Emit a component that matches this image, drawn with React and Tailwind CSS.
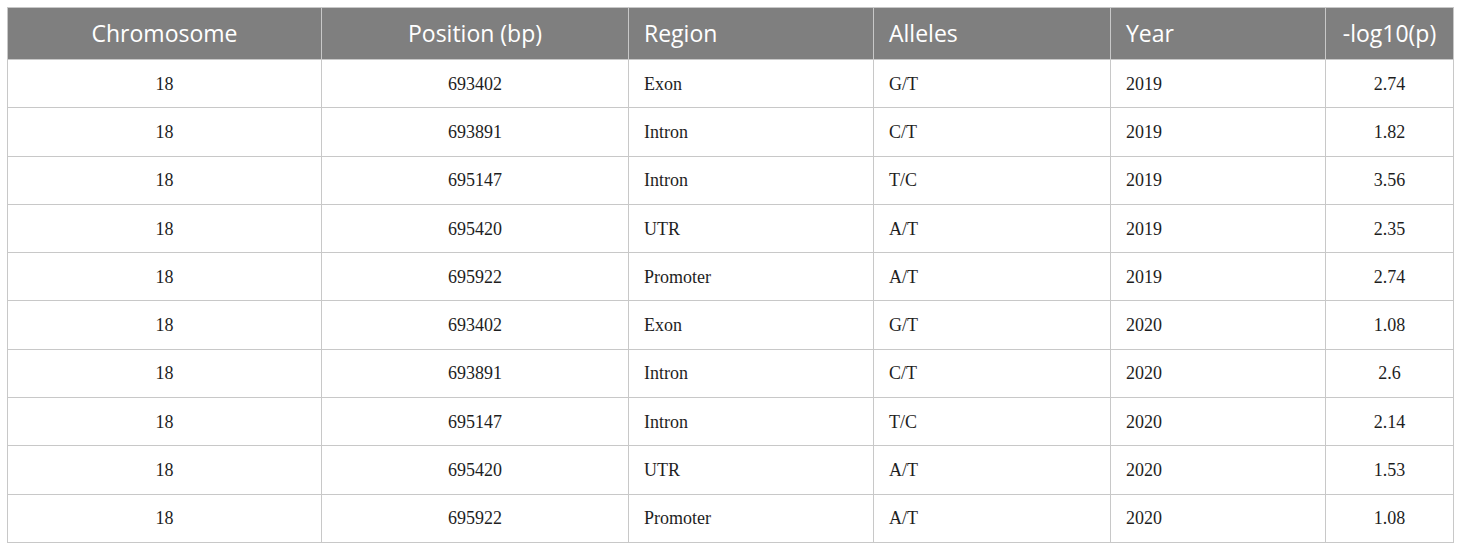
import React from "react";

const rows = [
  ["18", "693402", "Exon", "G/T", "2019", "2.74"],
  ["18", "693891", "Intron", "C/T", "2019", "1.82"],
  ["18", "695147", "Intron", "T/C", "2019", "3.56"],
  ["18", "695420", "UTR", "A/T", "2019", "2.35"],
  ["18", "695922", "Promoter", "A/T", "2019", "2.74"],
  ["18", "693402", "Exon", "G/T", "2020", "1.08"],
  ["18", "693891", "Intron", "C/T", "2020", "2.6"],
  ["18", "695147", "Intron", "T/C", "2020", "2.14"],
  ["18", "695420", "UTR", "A/T", "2020", "1.53"],
  ["18", "695922", "Promoter", "A/T", "2020", "1.08"],
];

const align = ["text-center", "text-center", "text-left pl-[15px]", "text-left pl-[15px]", "text-left pl-[15px]", "text-center"];

export default function App() {
  return (
    <div className="w-[1460px] h-[551px] bg-white pt-[7px] pl-[7px]">
      <table className="border-collapse table-fixed w-[1446px]">
        <colgroup>
          <col className="w-[314px]" />
          <col className="w-[307px]" />
          <col className="w-[245px]" />
          <col className="w-[237px]" />
          <col className="w-[215px]" />
          <col className="w-[128px]" />
        </colgroup>
        <thead>
          <tr className="h-[52px] bg-[#7f7f7f]">
            {["Chromosome", "Position (bp)", "Region", "Alleles", "Year", "-log10(p)"].map((h, i) => (
              <th
                key={i}
                className={`${align[i]} border border-[#c8c8c8] font-normal text-white text-[23px] leading-none p-0 ${i === 2 || i === 3 || i === 4 ? "pl-[15px]" : ""}`}
                style={{ fontFamily: '"Open Sans", sans-serif' }}
              >
                {h}
              </th>
            ))}
          </tr>
        </thead>
        <tbody>
          {rows.map((r, ri) => (
            <tr key={ri} className="h-[48.3px]">
              {r.map((c, ci) => (
                <td
                  key={ci}
                  className={`${align[ci]} border border-[#c8c8c8] text-[18px] leading-none text-[#1e1e1e] p-0`}
                  style={{ fontFamily: '"Liberation Serif", serif' }}
                >
                  {c}
                </td>
              ))}
            </tr>
          ))}
        </tbody>
      </table>
    </div>
  );
}
